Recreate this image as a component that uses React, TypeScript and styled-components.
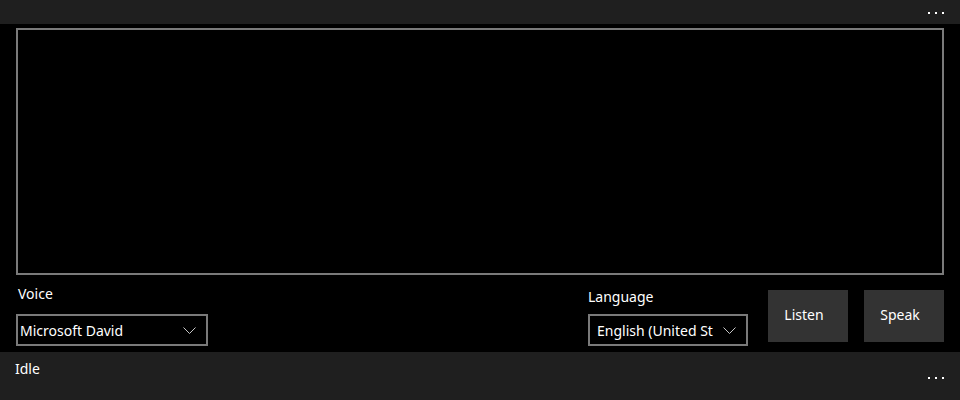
import React from 'react';
import styled, { createGlobalStyle } from 'styled-components';

const GlobalStyle = createGlobalStyle`
  html, body {
    margin: 0;
    padding: 0;
    background: #000;
  }
  body {
    font-family: "Segoe UI", "Noto Sans", "Open Sans", sans-serif;
    color: #fff;
  }
`;

const Page = styled.div`
  width: 960px;
  height: 400px;
  display: flex;
  flex-direction: column;
  background: #000;
  overflow: hidden;
`;

const CommandBar = styled.div<{ $height: number }>`
  height: ${(p) => p.$height}px;
  flex: none;
  background: #1f1f1f;
  display: flex;
  align-items: flex-start;
  justify-content: space-between;
  box-sizing: border-box;
`;

const MoreButton = styled.div<{ $top: number }>`
  display: flex;
  gap: 5px;
  margin: ${(p) => p.$top}px 16px 0 0;
`;

const Dot = styled.span`
  width: 2px;
  height: 2px;
  background: #fff;
`;

const StatusText = styled.span`
  font-size: 14px;
  line-height: 20px;
  margin: 7px 0 0 15px;
`;

const Content = styled.div`
  flex: 1;
  display: flex;
  flex-direction: column;
  padding: 4px 16px 0;
`;

const TextArea = styled.div`
  height: 247px;
  box-sizing: border-box;
  border: 2px solid #7a7a7a;
  background: #000;
`;

const Controls = styled.div`
  flex: 1;
  display: flex;
  align-items: flex-end;
`;

const Field = styled.div<{ $push?: boolean }>`
  display: flex;
  flex-direction: column;
  margin-bottom: 6px;
  margin-left: ${(p) => (p.$push ? 'auto' : '0')};
`;

const Label = styled.label<{ $gap: number; $indent: number }>`
  font-size: 14px;
  line-height: 20px;
  margin: 0 0 ${(p) => p.$gap}px ${(p) => p.$indent}px;
`;

const Select = styled.div<{ $width: number; $pad: number }>`
  width: ${(p) => p.$width}px;
  height: 32px;
  box-sizing: border-box;
  border: 2px solid #7a7a7a;
  display: flex;
  align-items: center;
  padding: 1px 10px 0 ${(p) => p.$pad}px;
  gap: 8px;
  font-size: 14px;
`;

const SelectValue = styled.span`
  flex: 1;
  white-space: nowrap;
  overflow: hidden;
`;

const Button = styled.button<{ $gap: number }>`
  width: 80px;
  height: 52px;
  margin: 0 0 10px ${(p) => p.$gap}px;
  border: none;
  background: #333;
  color: #fff;
  font-family: inherit;
  font-size: 14px;
  padding: 0 8px 4px 0;
`;

const Chevron = () => (
  <svg width="13" height="7" viewBox="0 0 13 7" fill="none">
    <path d="M0.5 0.5 L6.5 6.5 L12.5 0.5" stroke="#c8c8c8" strokeWidth="1" />
  </svg>
);

const More = ({ top }: { top: number }) => (
  <MoreButton $top={top}>
    <Dot />
    <Dot />
    <Dot />
  </MoreButton>
);

export default function App() {
  return (
    <>
      <GlobalStyle />
      <Page>
        <CommandBar $height={24}>
          <span />
          <More top={12} />
        </CommandBar>
        <Content>
          <TextArea />
          <Controls>
            <Field>
              <Label $gap={10} $indent={2}>Voice</Label>
              <Select $width={192} $pad={2}>
                <SelectValue>Microsoft David</SelectValue>
                <Chevron />
              </Select>
            </Field>
            <Field $push>
              <Label $gap={7} $indent={0}>Language</Label>
              <Select $width={160} $pad={7}>
                <SelectValue>English (United St</SelectValue>
                <Chevron />
              </Select>
            </Field>
            <Button $gap={20}>Listen</Button>
            <Button $gap={16}>Speak</Button>
          </Controls>
        </Content>
        <CommandBar $height={48}>
          <StatusText>Idle</StatusText>
          <More top={25} />
        </CommandBar>
      </Page>
    </>
  );
}
